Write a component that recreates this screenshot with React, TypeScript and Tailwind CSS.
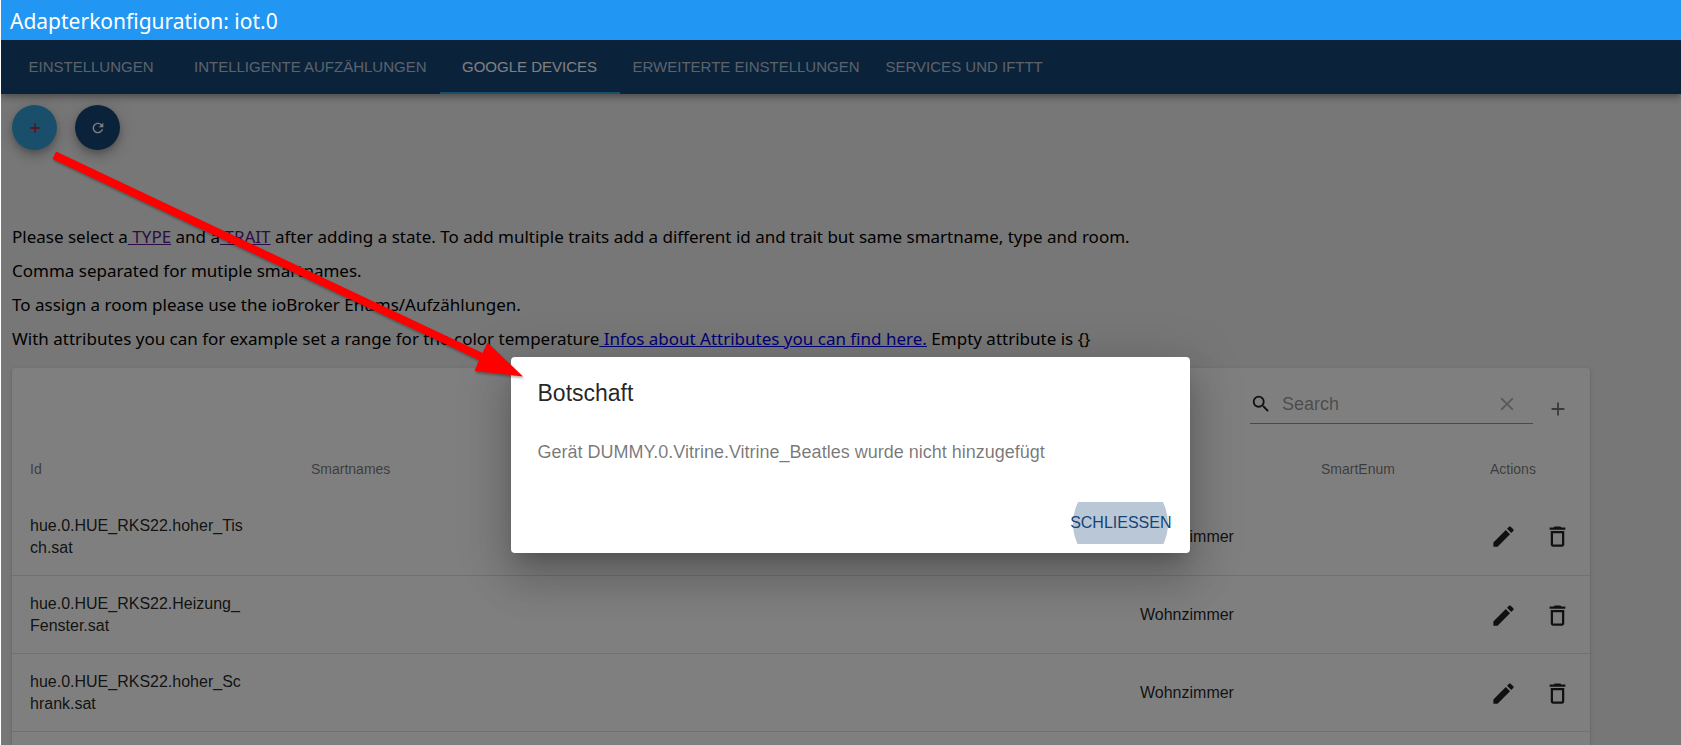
import { MdAdd, MdClear, MdDeleteOutline, MdEdit, MdRefresh, MdSearch } from "react-icons/md";

const tabs = [
  "Einstellungen",
  "Intelligente Aufzählungen",
  "Google Devices",
  "Erweiterte Einstellungen",
  "Services und IFTTT",
];

const devices = [
  { id: "hue.0.HUE_RKS22.hoher_Tisch.sat", room: "Wohnzimmer" },
  { id: "hue.0.HUE_RKS22.Heizung_Fenster.sat", room: "Wohnzimmer" },
  { id: "hue.0.HUE_RKS22.hoher_Schrank.sat", room: "Wohnzimmer" },
  { id: "", room: "" },
];

const fabShadow =
  "shadow-[0_3px_6px_-1px_rgba(0,0,0,0.2),0_7px_11px_0_rgba(0,0,0,0.14),0_1px_20px_0_rgba(0,0,0,0.12)]";

function TabBar() {
  return (
    <nav
      role="tablist"
      className="relative flex h-[54px] bg-[#164477] shadow-[0_2px_5px_-1px_rgba(0,0,0,0.2),0_5px_6px_0_rgba(0,0,0,0.14),0_1px_11px_0_rgba(0,0,0,0.12)]"
    >
      {tabs.map((tab) => {
        const active = tab === "Google Devices";
        return (
          <button
            key={tab}
            role="tab"
            aria-selected={active}
            className={
              "min-w-[180px] border-b-2 px-[13px] pt-[3px] text-[15px] uppercase " +
              (active ? "border-[#349fd7] text-white" : "border-transparent text-white/70")
            }
          >
            {tab}
          </button>
        );
      })}
    </nav>
  );
}

function Hints() {
  return (
    <div className="mt-[70px] font-['Noto_Sans',sans-serif] text-[17px] leading-[34px] text-black">
      <p>
        Please select a
        <a href="#type" className="text-[#551a8b] underline"> TYPE</a> and a
        <a href="#trait" className="text-[#551a8b] underline"> TRAIT</a> after adding a state. To add
        multiple traits add a different id and trait but same smartname, type and room.
      </p>
      <p>Comma separated for mutiple smartnames.</p>
      <p>To assign a room please use the ioBroker Enums/Aufzählungen.</p>
      <p>
        With attributes you can for example set a range for the color temperature
        <a href="#attributes" className="text-[#0000ee] underline"> Infos about Attributes you can find here.</a>{" "}
        Empty attribute is {"{}"}
      </p>
    </div>
  );
}

function DeviceTable() {
  return (
    <section className="mt-3 mr-20 rounded bg-white text-black/87 shadow-[0_2px_1px_-1px_rgba(0,0,0,0.2),0_1px_2px_0_rgba(0,0,0,0.14),0_1px_4px_0_rgba(0,0,0,0.12)]">
      <div className="flex h-[72px] items-center justify-end pr-[21px]">
        <label className="mt-1 flex h-9 w-[283px] items-center border-b border-black/42 pb-1">
          <MdSearch className="size-[22px]" />
          <input
            type="text"
            placeholder="Search"
            aria-label="Search"
            className="ml-[10px] min-w-0 flex-1 bg-transparent text-lg outline-none placeholder:text-black/42"
          />
          <button aria-label="Clear" className="mr-[15px] text-black/30">
            <MdClear className="size-[22px]" />
          </button>
        </label>
        <button aria-label="Add device" className="mt-[10px] ml-[14px] text-black/54">
          <MdAdd className="size-[22px]" />
        </button>
      </div>
      <table className="w-full table-fixed border-collapse text-left">
        <colgroup>
          <col className="w-[281px]" />
          <col />
          <col className="w-[181px]" />
          <col className="w-[169px]" />
          <col className="w-[118px]" />
        </colgroup>
        <thead>
          <tr className="h-[57px] text-[14px] text-black/54">
            <th className="px-[18px] pt-0.5 font-normal">Id</th>
            <th className="px-[18px] pt-0.5 font-normal">Smartnames</th>
            <th />
            <th className="px-[18px] pt-0.5 font-normal">SmartEnum</th>
            <th className="px-[18px] pt-0.5 font-normal">Actions</th>
          </tr>
        </thead>
        <tbody>
          {devices.map((device, index) => (
            <tr key={index} className="h-[78px] border-b border-[#e0e0e0] text-base leading-[22px]">
              <td className="pt-0.5 pr-[44px] pl-[18px] break-all">{device.id}</td>
              <td />
              <td className="px-[18px] pt-0.5">{device.room}</td>
              <td />
              <td className="pt-0.5 pl-[18px]">
                {device.id && (
                  <div className="flex gap-[27px]">
                    <button aria-label="Edit">
                      <MdEdit className="size-[27px]" />
                    </button>
                    <button aria-label="Delete">
                      <MdDeleteOutline className="size-[27px]" />
                    </button>
                  </div>
                )}
              </td>
            </tr>
          ))}
        </tbody>
      </table>
    </section>
  );
}

function MessageDialog() {
  return (
    <div className="absolute inset-0 flex items-start justify-center bg-black/50 pt-[317px] pl-[18px]">
      <div
        role="dialog"
        aria-labelledby="dialog-title"
        className="w-[679px] rounded bg-white shadow-[0_12px_17px_-8px_rgba(0,0,0,0.2),0_27px_43px_3px_rgba(0,0,0,0.14),0_10px_52px_9px_rgba(0,0,0,0.12)]"
      >
        <h2 id="dialog-title" className="px-[27px] pt-[18px] pb-[18px] text-[23px] leading-9 text-black/87">
          Botschaft
        </h2>
        <p className="px-[27px] pt-[9px] pb-9 text-lg leading-7 text-black/54">
          Gerät DUMMY.0.Vitrine.Vitrine_Beatles wurde nicht hinzugefügt
        </p>
        <div className="flex justify-end p-[9px] pt-0">
          <button className="relative flex h-[42px] items-center justify-center overflow-hidden rounded px-[9px] text-base text-[#164477] uppercase">
            <span className="absolute size-[95px] rounded-full bg-[#164477]/30" />
            <span className="relative">Schliessen</span>
          </button>
        </div>
      </div>
    </div>
  );
}

function Arrow() {
  return (
    <svg
      className="pointer-events-none absolute top-0 left-0 drop-shadow-[1px_2px_1px_rgba(0,0,0,0.3)]"
      width="540"
      height="400"
      viewBox="0 0 540 400"
      aria-hidden="true"
    >
      <path
        fill="#ff0000"
        d="M56 151.5 L482.5 353 L487.5 342.5 L523 376.5 L474.5 371 L479 360 L52.5 159 Z"
      />
    </svg>
  );
}

export default function App() {
  return (
    <div className="relative flex h-screen flex-col overflow-hidden bg-white pl-px font-['Liberation_Sans',Arial,sans-serif]">
      <header className="flex h-10 shrink-0 items-center bg-[#2196f3] px-[9px] pt-0.5">
        <h1 className="font-['Noto_Sans',sans-serif] text-[21px] leading-7 text-white">
          Adapterkonfiguration: iot.0
        </h1>
      </header>
      <main className="relative min-h-0 flex-1 overflow-hidden bg-[#eeeeee]">
        <TabBar />
        <div className="px-[11px] pt-[11px]">
          <div className="flex gap-[18px]">
            <button
              aria-label="Add"
              className={"flex size-[45px] items-center justify-center rounded-full bg-[#349fd7] text-[#d01020] " + fabShadow}
            >
              <MdAdd className="size-4" />
            </button>
            <button
              aria-label="Refresh"
              className={"flex size-[45px] items-center justify-center rounded-full bg-[#164477] text-white " + fabShadow}
            >
              <MdRefresh className="size-4" />
            </button>
          </div>
          <Hints />
          <DeviceTable />
        </div>
        <MessageDialog />
      </main>
      <Arrow />
    </div>
  );
}
